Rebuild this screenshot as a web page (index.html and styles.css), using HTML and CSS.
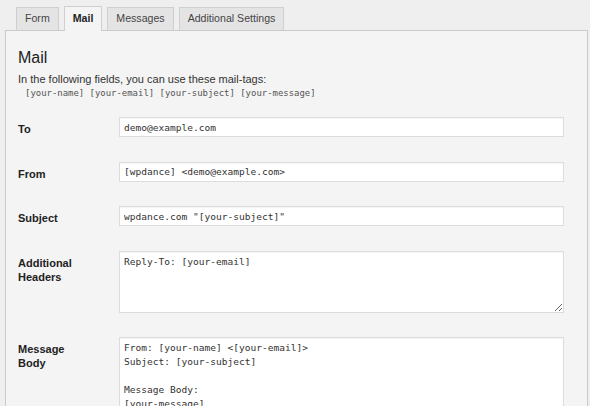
FILE: index.html
```html
<!DOCTYPE html>
<html>
<head>
<meta charset="utf-8">
<link rel="stylesheet" href="styles.css">
</head>
<body>
<div class="wrap">
  <div class="tabs">
    <span class="tab">Form</span>
    <span class="tab active">Mail</span>
    <span class="tab">Messages</span>
    <span class="tab">Additional Settings</span>
  </div>
  <div class="panel">
    <h2 class="title">Mail</h2>
    <p class="intro">In the following fields, you can use these mail-tags:</p>
    <p class="tags">[your-name] [your-email] [your-subject] [your-message]</p>
    <div class="fields">
      <label class="label">To</label>
      <input class="input" type="text" value="demo@example.com">
      <label class="label">From</label>
      <input class="input" type="text" value="[wpdance] <demo@example.com>">
      <label class="label">Subject</label>
      <input class="input" type="text" value="wpdance.com &quot;[your-subject]&quot;">
      <label class="label">Additional<br>Headers</label>
      <textarea class="area headers">Reply-To: [your-email]</textarea>
      <label class="label">Message<br>Body</label>
      <textarea class="area body">From: [your-name] &lt;[your-email]&gt;
Subject: [your-subject]

Message Body:
[your-message]

--
This e-mail was sent from a contact form</textarea>
    </div>
  </div>
</div>
</body>
</html>
```
FILE: styles.css
```css
html, body {
  margin: 0;
  padding: 0;
  background: #efefef;
  font-family: "Liberation Sans", Arial, Helvetica, sans-serif;
  color: #333;
  overflow: hidden;
}
.wrap {
  padding: 6px 2px 0 5px;
}
.tabs {
  display: flex;
  align-items: flex-end;
  gap: 5px;
  padding-left: 11px;
  height: 24px;
  position: relative;
  z-index: 1;
}
.tab {
  box-sizing: border-box;
  height: 23px;
  line-height: 21px;
  padding: 0 8px;
  font-size: 10.6px;
  color: #444;
  background: #e4e4e4;
  border: 1px solid #cfcfcf;
  border-bottom: none;
}
.tab.active {
  height: 25px;
  line-height: 23px;
  margin-bottom: -1px;
  background: #f4f4f4;
  font-weight: bold;
  color: #222;
}
.panel {
  background: #f4f4f4;
  border: 1px solid #cacaca;
  border-bottom: none;
  padding: 17px 23px 0 12px;
  height: 400px;
}
.title {
  margin: 0;
  font-size: 16px;
  line-height: 20px;
  font-weight: normal;
  color: #222;
}
.intro {
  margin: 4px 0 0;
  font-size: 11px;
  line-height: 14px;
  color: #333;
}
.tags {
  margin: 0;
  padding-left: 7px;
  font-family: "DejaVu Sans Mono", "Liberation Mono", monospace;
  font-size: 8.95px;
  line-height: 14px;
  color: #555;
}
.fields {
  display: grid;
  grid-template-columns: 101px 1fr;
  row-gap: 24.5px;
  margin-top: 17px;
}
.label {
  font-size: 11px;
  font-weight: bold;
  line-height: 14px;
  padding-top: 5px;
  color: #222;
}
.input, .area {
  box-sizing: border-box;
  width: 100%;
  margin: 0;
  border: 1px solid #dcdcdc;
  background: #fff;
  font-family: "DejaVu Sans Mono", "Liberation Mono", monospace;
  font-size: 9.55px;
  color: #333;
  outline: none;
  box-shadow: inset 0 1px 1px rgba(0,0,0,0.04);
}
.input {
  height: 20px;
  padding: 0 4px;
}
.area {
  padding: 3px 4px;
  line-height: 14px;
  resize: vertical;
  display: block;
}
.headers {
  height: 62px;
}
.body {
  height: 160px;
}
```
